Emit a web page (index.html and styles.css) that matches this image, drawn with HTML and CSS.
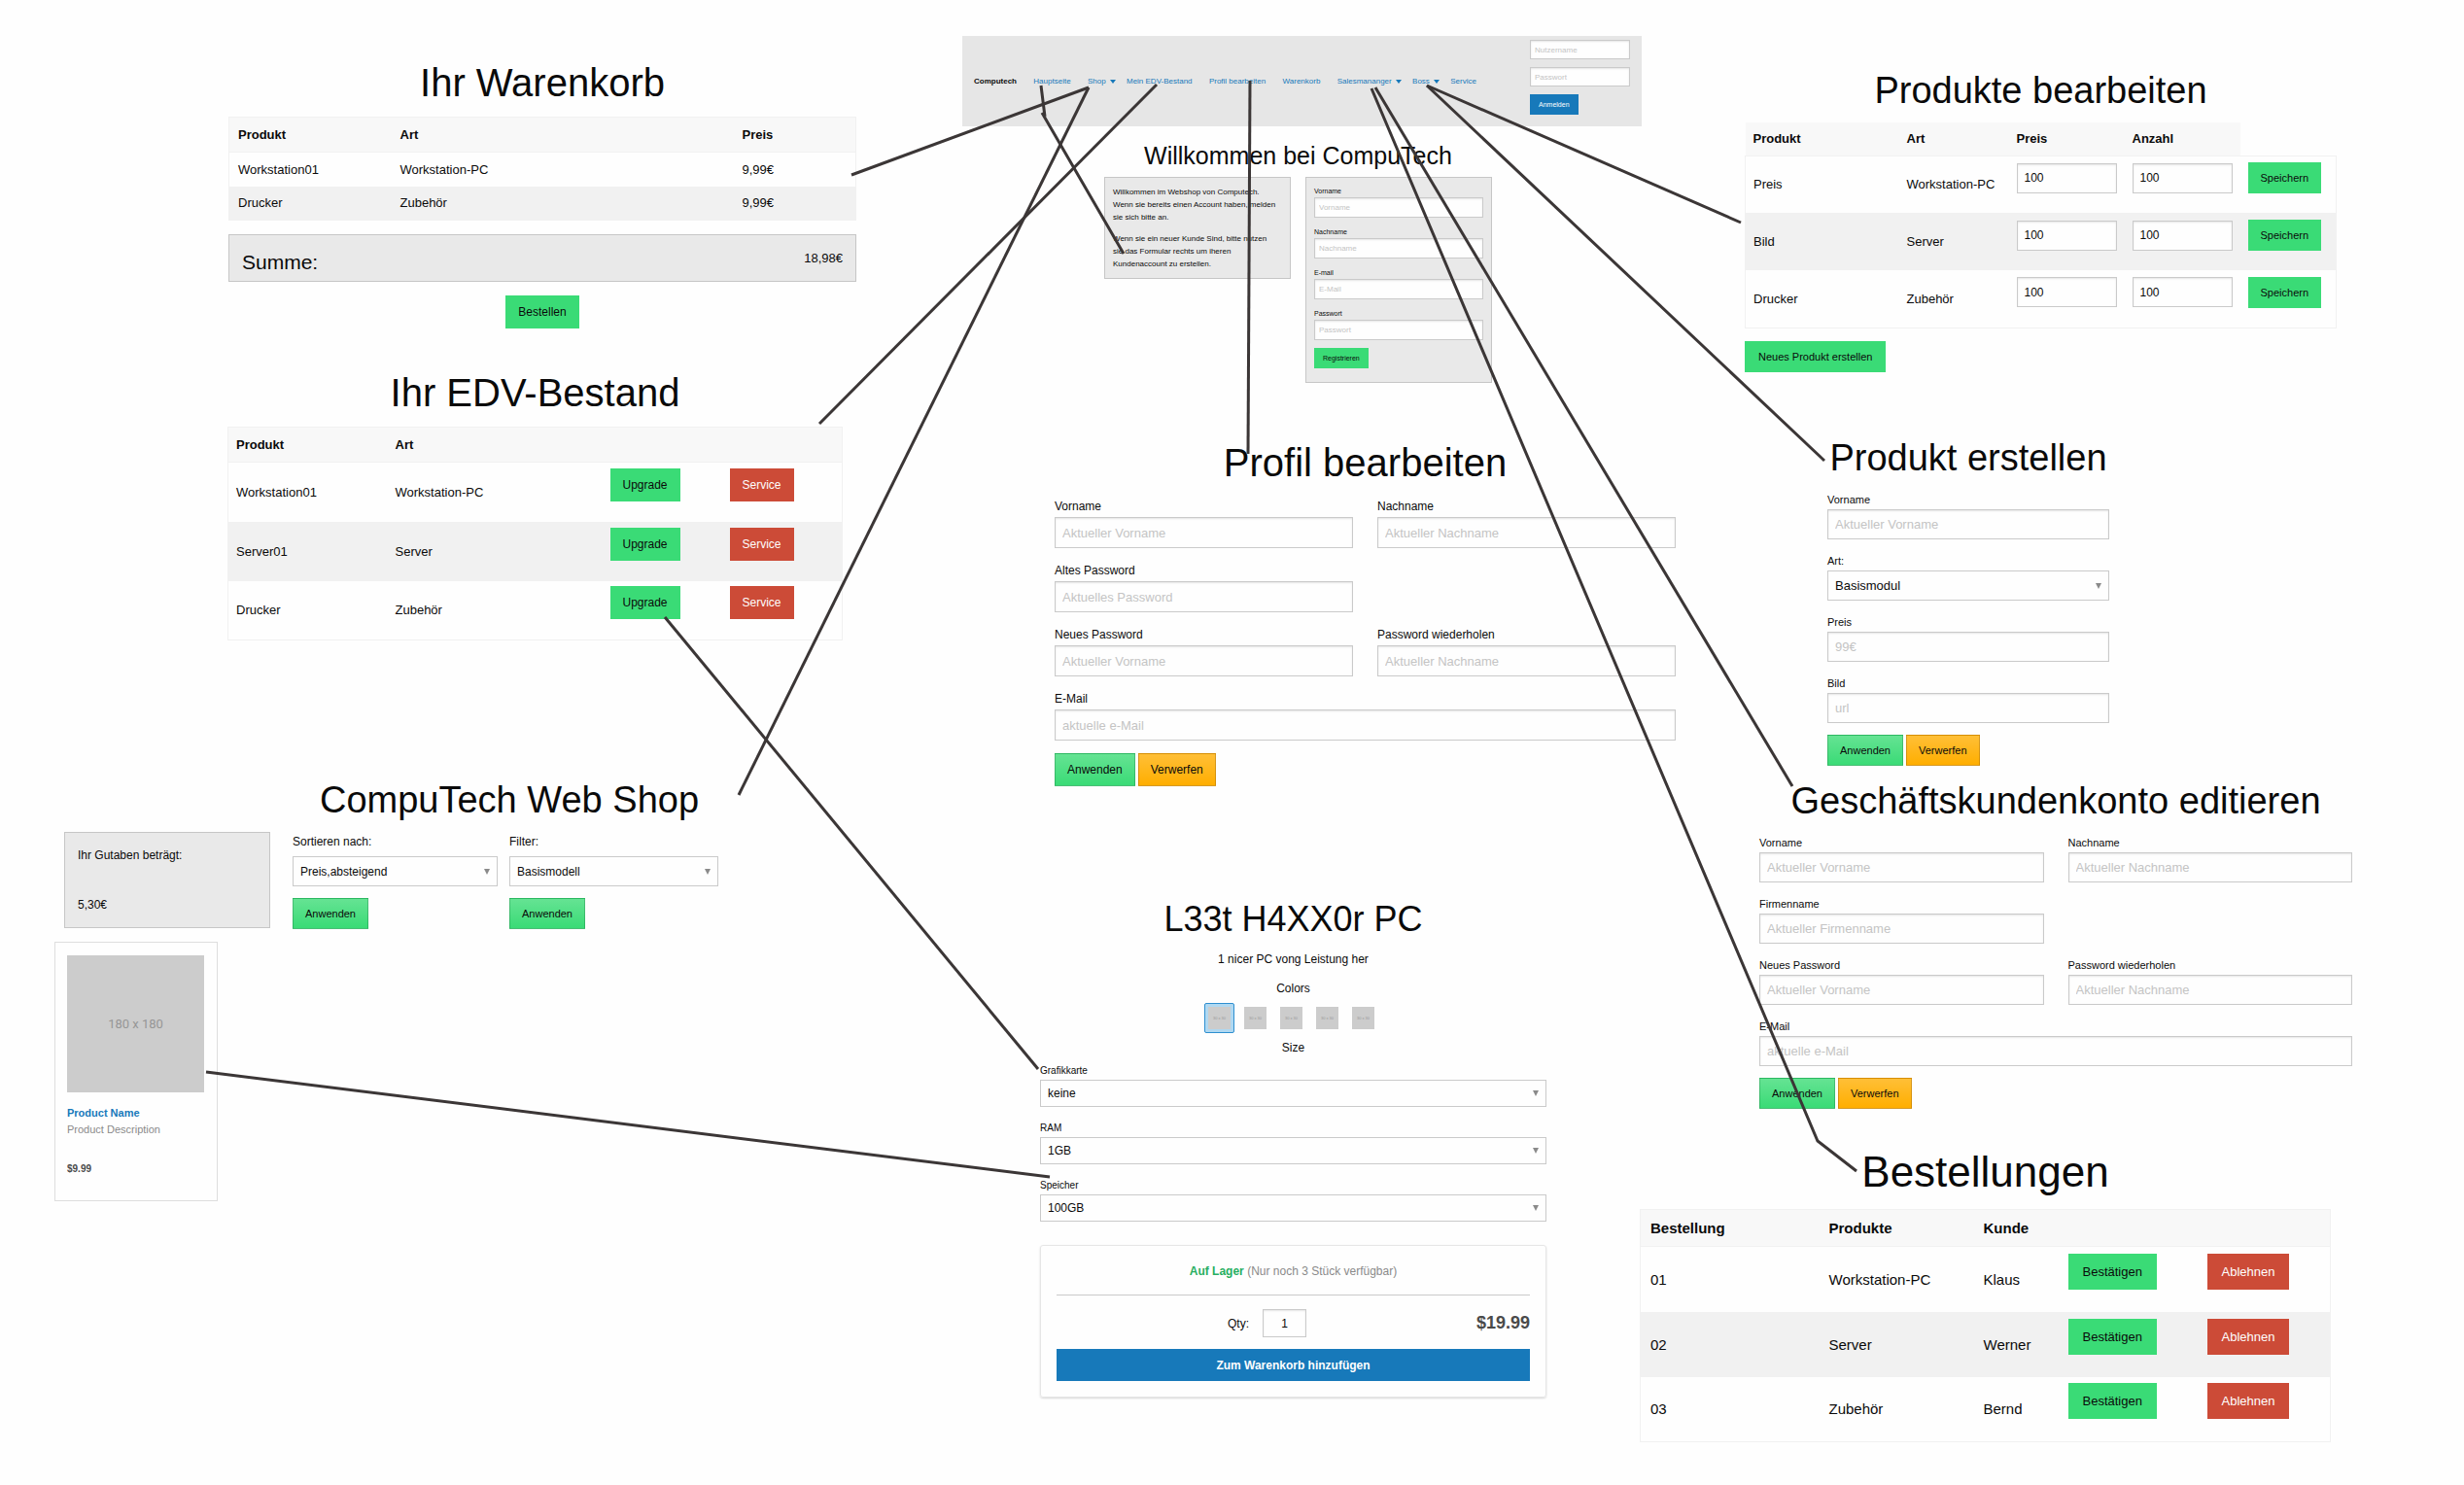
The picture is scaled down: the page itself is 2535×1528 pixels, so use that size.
FILE: index.html
```html
<!DOCTYPE html>
<html lang="de">
<head>
<meta charset="utf-8">
<title>Computech</title>
<link rel="stylesheet" href="styles.css">
</head>
<body>
<main class="board">

  <section class="screen cart">
    <h2>Ihr Warenkorb</h2>
    <table>
      <colgroup><col class="c1"><col class="c2"><col></colgroup>
      <thead><tr><th>Produkt</th><th>Art</th><th>Preis</th></tr></thead>
      <tbody>
        <tr><td>Workstation01</td><td>Workstation-PC</td><td>9,99€</td></tr>
        <tr><td>Drucker</td><td>Zubehör</td><td>9,99€</td></tr>
      </tbody>
    </table>
    <div class="callout sum"><span class="sum-label">Summe:</span><span>18,98€</span></div>
    <div class="center"><button class="btn">Bestellen</button></div>
  </section>

  <section class="screen stock">
    <h2>Ihr EDV-Bestand</h2>
    <table>
      <colgroup><col class="c1"><col class="c2"><col class="c3"><col></colgroup>
      <thead><tr><th>Produkt</th><th>Art</th><th></th><th></th></tr></thead>
      <tbody>
        <tr><td>Workstation01</td><td>Workstation-PC</td><td><button class="btn">Upgrade</button></td><td><button class="btn alert">Service</button></td></tr>
        <tr><td>Server01</td><td>Server</td><td><button class="btn">Upgrade</button></td><td><button class="btn alert">Service</button></td></tr>
        <tr><td>Drucker</td><td>Zubehör</td><td><button class="btn">Upgrade</button></td><td><button class="btn alert">Service</button></td></tr>
      </tbody>
    </table>
  </section>

  <section class="screen shop">
    <h2>CompuTech Web Shop</h2>
    <div class="shop-bar">
      <div class="callout credit"><p>Ihr Gutaben beträgt:</p><p>5,30€</p></div>
      <form class="shop-form sort">
        <label>Sortieren nach:<select><option>Preis,absteigend</option></select></label>
        <button type="button" class="btn glossy">Anwenden</button>
      </form>
      <form class="shop-form">
        <label>Filter:<select><option>Basismodell</option></select></label>
        <button type="button" class="btn glossy">Anwenden</button>
      </form>
    </div>
    <article class="product">
      <div class="thumb">180 x 180</div>
      <a href="#">Product Name</a>
      <p class="desc">Product Description</p>
      <p class="price">$9.99</p>
    </article>
  </section>

  <section class="screen home">
    <header class="topbar">
      <nav>
        <strong>Computech</strong>
        <a href="#">Hauptseite</a>
        <a href="#" class="drop">Shop</a>
        <a href="#">Mein EDV-Bestand</a>
        <a href="#">Profil bearbeiten</a>
        <a href="#">Warenkorb</a>
        <a href="#" class="drop">Salesmananger</a>
        <a href="#" class="drop">Boss</a>
        <a href="#">Service</a>
      </nav>
      <form class="login">
        <input type="text" placeholder="Nutzername" aria-label="Nutzername">
        <input type="password" placeholder="Passwort" aria-label="Passwort">
        <button type="button" class="btn primary">Anmelden</button>
      </form>
    </header>
    <div class="welcome">
      <h2>Willkommen bei CompuTech</h2>
      <div class="welcome-cols">
        <div class="callout intro">
          <p>Willkommen im Webshop von Computech. Wenn sie bereits einen Account haben, melden sie sich bitte an.</p>
          <p>Wenn sie ein neuer Kunde Sind, bitte nutzen sie das Formular rechts um iheren Kundenaccount zu erstellen.</p>
        </div>
        <form class="callout register">
          <label>Vorname<input type="text" placeholder="Vorname"></label>
          <label>Nachname<input type="text" placeholder="Nachname"></label>
          <label>E-mail<input type="email" placeholder="E-Mail"></label>
          <label>Passwort<input type="password" placeholder="Passwort"></label>
          <button type="button" class="btn">Registrieren</button>
        </form>
      </div>
    </div>
  </section>

  <section class="screen profile">
    <h2>Profil bearbeiten</h2>
    <form class="fields">
      <label>Vorname<input type="text" placeholder="Aktueller Vorname"></label>
      <label>Nachname<input type="text" placeholder="Aktueller Nachname"></label>
      <label class="first">Altes Password<input type="password" placeholder="Aktuelles Password"></label>
      <label class="first">Neues Password<input type="password" placeholder="Aktueller Vorname"></label>
      <label>Password wiederholen<input type="password" placeholder="Aktueller Nachname"></label>
      <label class="wide">E-Mail<input type="email" placeholder="aktuelle e-Mail"></label>
      <div class="actions wide"><button type="button" class="btn glossy">Anwenden</button><button type="button" class="btn glossy warning">Verwerfen</button></div>
    </form>
  </section>

  <section class="screen detail">
    <h2>L33t H4XX0r PC</h2>
    <p>1 nicer PC vong Leistung her</p>
    <p>Colors</p>
    <div class="swatches">
      <button class="swatch selected"><span>30 x 30</span></button>
      <button class="swatch"><span>30 x 30</span></button>
      <button class="swatch"><span>30 x 30</span></button>
      <button class="swatch"><span>30 x 30</span></button>
      <button class="swatch"><span>30 x 30</span></button>
    </div>
    <p>Size</p>
    <form>
      <label>Grafikkarte<select><option>keine</option></select></label>
      <label>RAM<select><option>1GB</option></select></label>
      <label>Speicher<select><option>100GB</option></select></label>
      <div class="buy">
        <p class="avail"><strong>Auf Lager</strong> (Nur noch 3 Stück verfügbar)</p>
        <div class="buy-row">
          <label class="qty">Qty:<input type="text" value="1"></label>
          <strong class="total">$19.99</strong>
        </div>
        <button type="button" class="btn primary">Zum Warenkorb hinzufügen</button>
      </div>
    </form>
  </section>

  <section class="screen products">
    <h2>Produkte bearbeiten</h2>
    <table>
      <colgroup><col class="c1"><col class="c2"><col class="c3"><col class="c4"><col></colgroup>
      <thead><tr><th>Produkt</th><th>Art</th><th>Preis</th><th>Anzahl</th></tr></thead>
      <tbody>
        <tr><td>Preis</td><td>Workstation-PC</td><td><input type="text" value="100" aria-label="Preis"></td><td><input type="text" value="100" aria-label="Anzahl"></td><td><button class="btn">Speichern</button></td></tr>
        <tr><td>Bild</td><td>Server</td><td><input type="text" value="100" aria-label="Preis"></td><td><input type="text" value="100" aria-label="Anzahl"></td><td><button class="btn">Speichern</button></td></tr>
        <tr><td>Drucker</td><td>Zubehör</td><td><input type="text" value="100" aria-label="Preis"></td><td><input type="text" value="100" aria-label="Anzahl"></td><td><button class="btn">Speichern</button></td></tr>
      </tbody>
    </table>
    <button class="btn new-product">Neues Produkt erstellen</button>
  </section>

  <section class="screen create">
    <h2>Produkt erstellen</h2>
    <form class="fields">
      <label>Vorname<input type="text" placeholder="Aktueller Vorname"></label>
      <label>Art:<select><option>Basismodul</option></select></label>
      <label>Preis<input type="text" placeholder="99€"></label>
      <label>Bild<input type="text" placeholder="url"></label>
      <div class="actions"><button type="button" class="btn glossy">Anwenden</button><button type="button" class="btn glossy warning">Verwerfen</button></div>
    </form>
  </section>

  <section class="screen business">
    <h2>Geschäftskundenkonto editieren</h2>
    <form class="fields">
      <label>Vorname<input type="text" placeholder="Aktueller Vorname"></label>
      <label>Nachname<input type="text" placeholder="Aktueller Nachname"></label>
      <label class="first">Firmenname<input type="text" placeholder="Aktueller Firmenname"></label>
      <label class="first">Neues Password<input type="password" placeholder="Aktueller Vorname"></label>
      <label>Password wiederholen<input type="password" placeholder="Aktueller Nachname"></label>
      <label class="wide">E-Mail<input type="email" placeholder="aktuelle e-Mail"></label>
      <div class="actions wide"><button type="button" class="btn glossy">Anwenden</button><button type="button" class="btn glossy warning">Verwerfen</button></div>
    </form>
  </section>

  <section class="screen orders">
    <h2>Bestellungen</h2>
    <table>
      <colgroup><col class="c1"><col class="c2"><col class="c3"><col class="c4"><col></colgroup>
      <thead><tr><th>Bestellung</th><th>Produkte</th><th>Kunde</th><th></th><th></th></tr></thead>
      <tbody>
        <tr><td>01</td><td>Workstation-PC</td><td>Klaus</td><td><button class="btn">Bestätigen</button></td><td><button class="btn alert">Ablehnen</button></td></tr>
        <tr><td>02</td><td>Server</td><td>Werner</td><td><button class="btn">Bestätigen</button></td><td><button class="btn alert">Ablehnen</button></td></tr>
        <tr><td>03</td><td>Zubehör</td><td>Bernd</td><td><button class="btn">Bestätigen</button></td><td><button class="btn alert">Ablehnen</button></td></tr>
      </tbody>
    </table>
  </section>

  <!-- navigation paths between the screens -->
  <svg class="links" aria-hidden="true">
    <path d="M1071 88L1075 120M1072 116L1156 261"/>
    <path d="M1120 90L876 180"/>
    <path d="M1120 90L760 818"/>
    <path d="M1190 87L843 436"/>
    <path d="M1286 83L1284 467"/>
    <path d="M1411 91L1870 1174L1910 1205"/>
    <path d="M1415 90L1844 809"/>
    <path d="M1468 88L1791 229"/>
    <path d="M1468 88L1877 474"/>
    <path d="M684 635L1068 1100"/>
    <path d="M212 1103L1080 1211"/>
  </svg>
</main>
</body>
</html>
```
FILE: styles.css
```css
* { box-sizing: border-box; }

body {
  margin: 0;
  background: #fefefe;
  color: #0a0a0a;
  font-family: "Liberation Sans", Arial, sans-serif;
}

h2, p { margin: 0; font-weight: 400; }
h2 { text-align: center; white-space: nowrap; }
a { color: #1779ba; text-decoration: none; }

/* free canvas that carries the screens */
.board { position: relative; min-height: 100vh; overflow: hidden; }
.screen { position: absolute; }
.cart     { left: 235px;  top: 50px;   width: 646px; }
.stock    { left: 234px;  top: 369px;  width: 633px; }
.shop     { left: 56px;   top: 790px;  width: 936px; }
.home     { left: 990px;  top: 37px;   width: 699px; }
.profile  { left: 1085px; top: 441px;  width: 639px; }
.detail   { left: 1070px; top: 920px;  width: 521px; }
.products { left: 1795px; top: 60px;   width: 609px; }
.create   { left: 1880px; top: 438px;  width: 290px; }
.business { left: 1810px; top: 791px;  width: 610px; }
.orders   { left: 1687px; top: 1168px; width: 711px; }

.links {
  position: absolute;
  left: 0;
  top: 0;
  width: 100%;
  height: 100%;
  fill: none;
  stroke: #3b3636;
  stroke-width: 3;
  pointer-events: none;
}

/* headings */
.cart h2, .stock h2, .profile h2 { font-size: 40px; line-height: 70px; }
.shop h2, .products h2, .create h2, .business h2 { font-size: 38px; line-height: 66px; }
.home h2 { font-size: 25px; line-height: 44px; }
.detail h2 { font-size: 36px; line-height: 52px; }
.orders h2 { font-size: 44px; line-height: 76px; }

/* buttons */
.btn {
  display: block;
  height: 34px;
  padding: 0 13px;
  border: 0;
  background: #3adb76;
  color: #0a0a0a;
  font: 12px "Liberation Sans", Arial, sans-serif;
  white-space: nowrap;
}
.alert { background: #cc4b37; color: #fefefe; }
.primary { background: #1779ba; color: #fefefe; }
.glossy { background: linear-gradient(#65e393, #3adb76); border: 1px solid rgba(0, 80, 30, .25); padding: 0 12px; }
.glossy.warning { background: linear-gradient(#ffbf37, #ffae00); border-color: rgba(120, 70, 0, .3); }
.center { display: flex; justify-content: center; }
.actions { display: flex; gap: 3px; }

/* form controls */
label { display: block; }
input, select {
  display: block;
  width: 100%;
  margin: 0;
  padding: 0 7px;
  border: 1px solid #cacaca;
  border-radius: 0;
  background: #fefefe;
  box-shadow: inset 0 1px 2px rgba(10, 10, 10, .1);
  color: #0a0a0a;
  font-family: "Liberation Sans", Arial, sans-serif;
}
select {
  appearance: none;
  box-shadow: none;
  background: #fefefe url("data:image/svg+xml,%3Csvg xmlns='http://www.w3.org/2000/svg' viewBox='0 0 6 6'%3E%3Cpath d='M0 0h6L3 6z' fill='%238a8a8a'/%3E%3C/svg%3E") right 7px center / 6px 6px no-repeat;
}
input::placeholder { color: #c4c4c4; opacity: 1; }

.fields { display: grid; grid-template-columns: 1fr 1fr; column-gap: 25px; }
.fields .first { grid-column: 1; }
.fields .wide { grid-column: 1 / -1; }
.fields label { font-size: 11px; line-height: 20px; }
.fields input, .fields select { height: 31px; margin-bottom: 12px; font-size: 13px; }
.fields .btn { height: 32px; font-size: 11px; }
.profile .fields label { font-size: 12px; line-height: 21px; }
.profile .fields input { height: 32px; margin-bottom: 13px; }
.profile .fields .btn { height: 34px; font-size: 12px; }
.create .fields { grid-template-columns: 1fr; }

/* tables */
table {
  width: 100%;
  border-collapse: collapse;
  table-layout: fixed;
  font-size: 13px;
}
th, td { padding: 0 9px; text-align: left; white-space: nowrap; }
th { background: #f8f8f8; }
tbody { border: 1px solid #f1f1f1; }
tbody tr:nth-child(even) { background: #f1f1f1; }

.cart table, .stock table, .orders table { border: 1px solid #f1f1f1; }
.cart thead tr { height: 36px; }
.cart tbody tr { height: 35px; }
.cart .c1 { width: 167px; }
.cart .c2 { width: 352px; }

.stock thead tr { height: 36px; }
.stock tbody tr { height: 61px; }
.stock .c1 { width: 164px; }
.stock .c2 { width: 221px; }
.stock .c3 { width: 123px; }
.stock td, .stock th { padding: 0 8px; }
.stock td .btn { margin-bottom: 15px; }

.products thead tr { height: 34px; }
.products tbody tr { height: 59px; }
.products .c1 { width: 158px; }
.products .c2 { width: 113px; }
.products .c3, .products .c4 { width: 119px; }
.products td, .products th { padding: 0 8px; }
.products input { height: 31px; margin-bottom: 13px; font-size: 12px; }
.products .btn { height: 32px; font-size: 11px; }
.products td .btn { margin-bottom: 13px; }
.products .new-product { margin-top: 13px; padding: 0 14px; }

.orders table { font-size: 15px; }
.orders th, .orders td { padding: 0 10px; }
.orders thead tr { height: 38px; }
.orders tbody tr { height: 67px; }
.orders .c1 { width: 184px; }
.orders .c2 { width: 159px; }
.orders .c3 { width: 87px; }
.orders .c4 { width: 143px; }
.orders .btn { height: 37px; margin-bottom: 16px; padding: 0 15px; font-size: 13px; }

/* grey boxes */
.callout { border: 1px solid #c6c6c6; background: #e9e9e9; }
.sum {
  display: flex;
  justify-content: space-between;
  align-items: flex-start;
  margin: 14px 0;
  padding: 13px 13px 4px;
  font-size: 13px;
  line-height: 22px;
}
.sum-label { font-size: 21px; line-height: 30px; }

/* shop */
.shop-bar { display: flex; align-items: flex-start; padding-left: 10px; font-size: 12px; }
.credit {
  display: flex;
  flex-direction: column;
  gap: 31px;
  width: 212px;
  margin-right: 23px;
  padding: 13px;
  line-height: 20px;
}
.shop-form { width: 215px; }
.sort { width: 211px; margin-right: 12px; }
.shop-form label { line-height: 20px; }
.shop-form select { height: 31px; margin: 5px 0 12px; font-size: 12px; }
.shop-form .btn { height: 32px; font-size: 11px; }

.product {
  width: 168px;
  margin-top: 13px;
  padding: 13px 13px 24px 12px;
  border: 1px solid #dedede;
  font-size: 11px;
  line-height: 17px;
}
.thumb {
  display: flex;
  align-items: center;
  justify-content: center;
  height: 141px;
  margin-bottom: 13px;
  background: #ccc;
  color: #969696;
  font: 13px Roboto, sans-serif;
}
.product a { display: block; font-weight: 700; }
.desc { color: #8a8a8a; }
.price { margin-top: 23px; color: #4a4a4a; font-size: 10px; font-weight: 700; }

/* home */
.topbar {
  display: flex;
  align-items: flex-start;
  justify-content: space-between;
  padding: 4px 12px 12px;
  background: #e6e6e6;
  font-size: 8px;
}
.topbar nav { display: flex; justify-content: space-between; align-self: center; width: 517px; padding-top: 8px; }
.drop { display: flex; align-items: center; gap: 4px; margin-right: -6px; }
.drop::after {
  content: "";
  border: 3px solid transparent;
  border-top: 4px solid #1779ba;
  border-bottom: 0;
}
.login { display: flex; flex-direction: column; align-items: flex-start; gap: 8px; width: 103px; }
.login input { height: 20px; padding: 0 4px; font-size: 8px; }
.login .btn { height: 21px; padding: 0 9px; font-size: 7px; }
.welcome { padding: 8px 154px 0 146px; }
.welcome-cols { display: grid; grid-template-columns: 1fr 1fr; gap: 15px; align-items: start; }
.intro { padding: 8px 12px 8px 8px; font-size: 8px; line-height: 13px; }
.intro p + p { margin-top: 9px; }
.register { padding: 7px 8px 14px; font-size: 7px; line-height: 13px; }
.register input { height: 21px; margin-bottom: 8px; padding: 0 4px; font-size: 8px; }
.register .btn { height: 21px; padding: 0 9px; font-size: 7px; }

/* product detail */
.detail p { font-size: 12px; line-height: 30px; text-align: center; }
.swatches { display: flex; justify-content: center; gap: 6px; padding-right: 4px; }
.swatch {
  width: 31px;
  height: 31px;
  padding: 3px;
  border: 1px solid transparent;
  border-radius: 2px;
  background: none;
}
.swatch.selected { border-color: #2e8fd0; background: #b0d8f1; }
.swatch span {
  display: block;
  height: 23px;
  background: #ccc;
  color: #999;
  font-size: 4px;
  line-height: 23px;
}
.detail label { font-size: 10px; line-height: 18px; }
.detail select { height: 28px; margin-bottom: 13px; font-size: 12px; }
.buy {
  margin-top: 24px;
  padding: 14px 16px 16px;
  border: 1px solid #e6e6e6;
  border-radius: 3px;
  box-shadow: 0 1px 2px rgba(10, 10, 10, .15);
}
.detail .avail {
  margin-bottom: 14px;
  padding-bottom: 12px;
  border-bottom: 1px solid #cacaca;
  color: #8a8a8a;
  line-height: 24px;
}
.avail strong { color: #27ae60; }
.buy-row { display: flex; align-items: center; justify-content: space-between; margin-bottom: 12px; padding-left: 176px; }
.detail .qty { display: flex; align-items: center; gap: 14px; font-size: 12px; }
.qty input { width: 45px; height: 29px; font-size: 12px; text-align: center; }
.total { color: #4a4a4a; font-size: 18px; }
.buy .btn { width: 100%; height: 33px; font-weight: 700; }
```
